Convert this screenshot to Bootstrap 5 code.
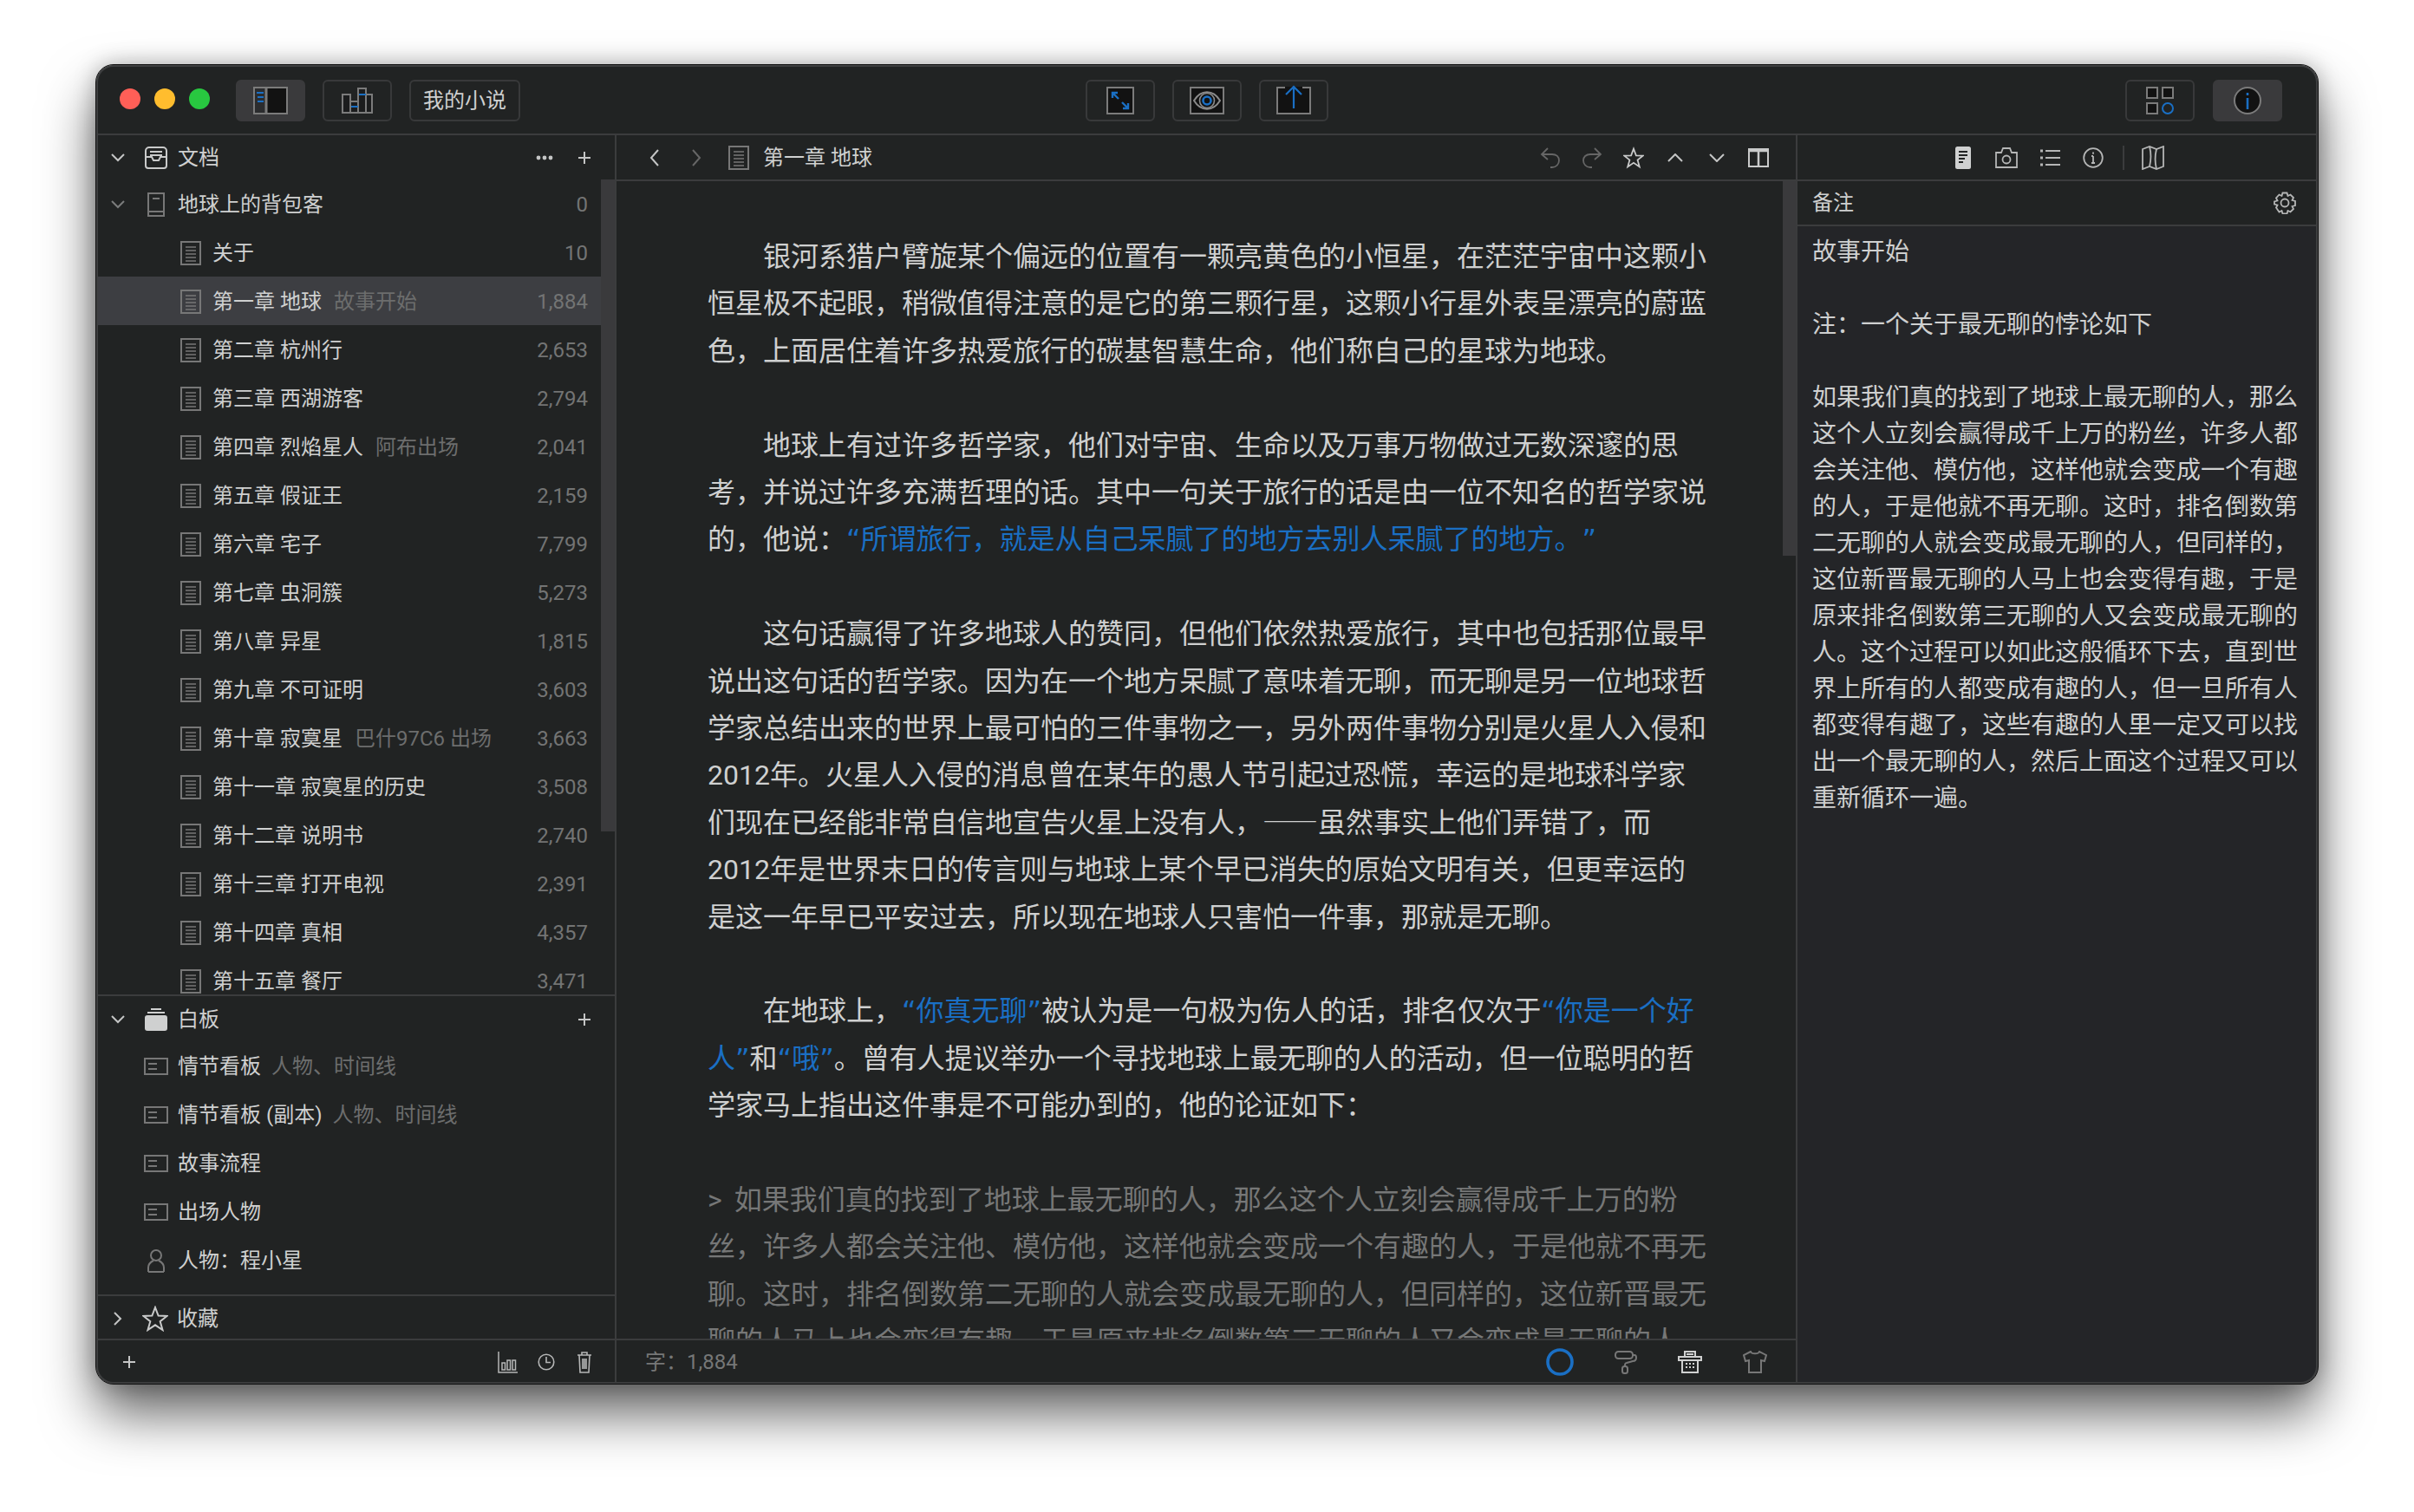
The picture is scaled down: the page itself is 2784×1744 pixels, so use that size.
<!DOCTYPE html>
<html lang="zh-CN">
<head>
  <meta charset="utf-8">
  <title>我的小说</title>
  <link href="https://cdn.jsdelivr.net/npm/bootstrap@5.3.0/dist/css/bootstrap.min.css" rel="stylesheet">
  <style>
    body {
      margin: 0;
      height: 1744px;
      overflow: hidden;
      background: #fff;
      font-family: Roboto, "Noto Sans CJK SC", sans-serif;
      font-size: 24px;
      color: #cfd0d0;
    }
    svg { display: block; flex: none; fill: none; }
    .symbol-defs { position: absolute; }
    .app-window {
      width: 2562px;
      height: 1521px;
      margin: 75px 0 0 111px;
      background: #212323;
      border-radius: 20px;
      overflow: hidden;
      outline: 1px solid #111;
      box-shadow: 0 34px 62px rgba(0,0,0,.62), 0 0 26px rgba(0,0,0,.28);
      position: relative;
    }
    .app-window::after {
      content: "";
      position: absolute;
      inset: 0;
      border-radius: 20px;
      border: 2px solid #3e3f40;
      border-bottom-color: #3a3b3c;
      pointer-events: none;
    }
    .title-bar { height: 81px; padding: 17px 41px 0 27px; border-bottom: 2px solid #3b3c3d; }
    .title-side { flex: 1 1 0; }
    .title-center { margin: 0 -7px 0 7px; }
    .title-right { gap: 21px; }
    .light { width: 24px; height: 24px; border-radius: 50%; margin-top: 10px; margin-right: 16px; }
    .light-r { background: #ff5f57; }
    .light-y { background: #ffbd2e; }
    .light-g { background: #28c840; margin-right: 14px; }
    .tool-btn {
      --bs-btn-border-radius: 6px;
      width: 80px;
      height: 48px;
      padding: 0;
      border: 2px solid #38393a;
      color: #cfd0d0;
      font-size: 24px;
    }
    .tool-btn.on { background: #3a3a3c; border-color: #3a3a3c; }
    .tool-wide { width: 128px; }
    .gap-20 { gap: 20px; }

    .main-area { height: 1440px; }
    .side-pane { width: 600px; border-right: 2px solid #3b3c3d; }
    .edit-pane { width: 1362px; border-right: 2px solid #3b3c3d; }
    .info-pane { width: 600px; }

    .pane-head { height: 51px; }
    .side-head { padding: 2px 17px 0; }
    .sec-icon { margin: 0 11px 0 22px; }
    .head-dots { margin-left: auto; }
    .head-plus { margin-left: 28px; margin-right: 10px; }
    .head-plus-only { margin-left: auto; margin-right: 10px; }
    .sep-line { height: 2px; background: #3b3c3d; flex: none; }

    .doc-scroll { height: 941px; overflow: hidden; }
    .doc-list {
      --bs-list-group-bg: transparent;
      --bs-list-group-color: #cfd0d0;
      --bs-list-group-border-width: 0;
      --bs-list-group-border-radius: 0;
      width: 582px;
      flex: none;
    }
    .doc-row { flex: none; height: 56px; padding: 2px 15px 0 97px; white-space: nowrap; line-height: 54px; }
    .doc-row.active-row { background: #3d3e42; }
    .doc-row.root-row { padding-left: 17px; }
    .doc-row.board-row { padding-left: 55px; }
    .doc-row.person-row { padding-left: 59px; }
    .chevron-dim { opacity: .55; }
    .row-icon { margin-right: 13px; }
    .root-icon { margin: 0 15px 0 26px; }
    .board-icon { margin-right: 11px; }
    .person-icon { margin-right: 15px; }
    .doc-note { color: #6c6d6d; margin-left: 14px; }
    .board-row .doc-note { margin-left: 12px; }
    .doc-count { color: #737474; margin-left: auto; }
    .scroll-col { width: 16px; flex: none; }
    .scroll-thumb { background: #3a3a3c; }
    .side-thumb { height: 752px; }
    .edit-thumb { height: 432px; }

    .board-list { height: 344px; flex: none; }
    .board-head { height: 52px; }
    .fav-row { height: 49px; padding: 2px 17px 0; flex: none; }
    .fav-star { margin: 0 10px 0 20px; }
    .foot-bar { height: 50px; flex: none; }
    .side-foot { padding: 0 26px 0 30px; gap: 22px; }
    .side-foot .foot-first { margin-right: auto; }
    .foot-trash { margin-left: 3px; }

    .edit-head { padding: 2px 19px 0 38px; }
    .nav-forward { margin-left: 38px; }
    .doc-tab { margin: 0 16px 0 31px; }
    .act-cell { width: 48px; }
    .edit-body { height: 1336px; overflow: hidden; }
    .edit-text {
      width: 1345px;
      flex: none;
      padding: 60px 88px 0 105px;
      font-size: 32px;
      line-height: 54.4px;
      color: #cfd0d0;
      text-spacing-trim: space-all;
    }
    .edit-text p { margin: 0 0 54.4px; text-indent: 64px; }
    .edit-text .quote-para { color: #767777; text-indent: 0; word-spacing: 6px; }
    .hl { color: #1a6fc4; }
    .cq { font-family: "DejaVu Sans", sans-serif; line-height: 1; }
    .cjk-dash { font-family: "Noto Sans CJK SC", sans-serif; line-height: 1; }
    .edit-foot { padding: 0 33px 0 33px; color: #767777; font-size: 24px; }
    .foot-icons { margin-left: auto; gap: 47px; align-items: center; }

    .info-tabs { height: 51px; }
    .info-tab { width: 50px; }
    .info-sep { width: 2px; height: 28px; background: #3b3c3d; margin: 0 8px 0 9px; }
    .note-head { height: 50px; padding: 0 25px 0 17px; }
    .note-body { background: #242528; height: 1335px; padding: 9px 23px 0 17px; font-size: 28px; line-height: 42px; color: #cfd0d0; flex: none; }
    .note-body p { margin: 0; }
  </style>
</head>
<body>
  <svg class="symbol-defs" width="0" height="0">
    <symbol id="i-doc" viewBox="0 0 24 28">
      <rect x="1" y="1" width="22" height="26" fill="none" stroke="#777" stroke-width="2"/>
      <path d="M6 7h12M6 11h12M6 15h12M6 19h12M6 23h12" stroke="#777" stroke-width="1.6"/>
    </symbol>
    <symbol id="i-board" viewBox="0 0 28 20">
      <rect x="1" y="1" width="26" height="18" fill="none" stroke="#777" stroke-width="2"/>
      <path d="M5 7h10M5 13h10" stroke="#777" stroke-width="2"/>
    </symbol>
    <symbol id="i-plus" viewBox="0 0 16 16">
      <path d="M8 1v14M1 8h14" fill="none" stroke="#c4c5c5" stroke-width="2"/>
    </symbol>
    <symbol id="i-down" viewBox="0 0 16 10">
      <path d="M1 1l7 7 7-7" fill="none" stroke="#c4c5c5" stroke-width="2"/>
    </symbol>
  </svg>

  <div class="app-window d-flex flex-column">
    <!-- Title bar -->
    <div class="title-bar d-flex align-items-start flex-none">
      <div class="title-side d-flex align-items-start">
        <span class="light light-r"></span><span class="light light-y"></span><span class="light light-g"></span>
        <div class="d-flex gap-20 ms-3">
          <button class="btn tool-btn on d-flex align-items-center justify-content-center">
            <svg width="40" height="32" viewBox="0 0 40 32"><rect x="1" y="1" width="38" height="30" fill="#121212" stroke="#7b7b7b" stroke-width="2"/><rect x="2" y="2" width="13" height="28" fill="#2b2c2e"/><path d="M15 1v30" stroke="#7b7b7b" stroke-width="3"/><path d="M4 7h8M5 12h7M5 17h7" stroke="#1a6fc4" stroke-width="2"/></svg>
          </button>
          <button class="btn tool-btn d-flex align-items-center justify-content-center">
            <svg width="36" height="30" viewBox="0 0 36 30"><path d="M1 8h9v21H1zM10 16h9v13h-9zM19 1h9v28h-9zM28 8h7v21h-7z" fill="#1b1c1d" stroke="#7b7b7b" stroke-width="2"/><path d="M11 22h8M20 8h8" stroke="#1a6fc4" stroke-width="2"/></svg>
          </button>
          <button class="btn tool-btn tool-wide">我的小说</button>
        </div>
      </div>
      <div class="title-center d-flex gap-20">
        <button class="btn tool-btn d-flex align-items-center justify-content-center">
          <svg width="32" height="32" viewBox="0 0 32 32"><rect x="1" y="1" width="30" height="30" fill="#121212" stroke="#7b7b7b" stroke-width="2"/><path d="M7 13V7h6M7 7l7 7M25 19v6h-6M25 25l-7-7" stroke="#1a6fc4" stroke-width="2.4"/></svg>
        </button>
        <button class="btn tool-btn d-flex align-items-center justify-content-center">
          <svg width="40" height="32" viewBox="0 0 40 32"><rect x="1" y="1" width="38" height="30" fill="#121212" stroke="#7b7b7b" stroke-width="2"/><path d="M5 16c8-13 22-13 30 0-8 13-22 13-30 0z" stroke="#8b8b8b" stroke-width="2"/><circle cx="20" cy="16" r="8.5" stroke="#8b8b8b" stroke-width="1.6"/><circle cx="20" cy="16" r="4.5" stroke="#1a6fc4" stroke-width="2.6"/></svg>
        </button>
        <button class="btn tool-btn d-flex align-items-center justify-content-center">
          <svg width="40" height="36" viewBox="0 0 40 36"><path d="M10 3H1v30h38V3h-9" fill="#121212" stroke="#7b7b7b" stroke-width="2"/><rect x="10" y="2" width="20" height="4" fill="#121212"/><path d="M20 2v25M11 11l9-9 9 9" stroke="#1a6fc4" stroke-width="2.2"/></svg>
        </button>
      </div>
      <div class="title-side title-right d-flex justify-content-end">
        <button class="btn tool-btn d-flex align-items-center justify-content-center">
          <svg width="32" height="32" viewBox="0 0 32 32"><path d="M1 1h12v12H1zM19 1h12v12H19zM1 19h12v12H1z" fill="#121212" stroke="#7b7b7b" stroke-width="2"/><ellipse cx="25" cy="25" rx="6" ry="6" stroke="#1a6fc4" stroke-width="2"/></svg>
        </button>
        <button class="btn tool-btn on d-flex align-items-center justify-content-center">
          <svg width="32" height="32" viewBox="0 0 32 32"><circle cx="16" cy="16" r="15" fill="#121212" stroke="#7b7b7b" stroke-width="2"/><path d="M16 13v13M16 7v3" stroke="#1a6fc4" stroke-width="2.6"/></svg>
        </button>
      </div>
    </div>

    <div class="main-area d-flex">
      <!-- Sidebar -->
      <div class="side-pane d-flex flex-column flex-none">
        <div class="pane-head side-head d-flex align-items-center">
          <svg width="16" height="10"><use href="#i-down"/></svg>
          <svg class="sec-icon" width="28" height="28" viewBox="0 0 28 28" stroke="#c9caca" stroke-width="2"><path d="M2 13V6a4 4 0 0 1 4-4h16a4 4 0 0 1 4 4v7M2 13v10a3 3 0 0 0 3 3h18a3 3 0 0 0 3-3V13h-7l-2 4h-6l-2-4H2ZM7 7h14M7 11h14"/></svg>
          <span>文档</span>
          <svg class="head-dots" width="20" height="6" viewBox="0 0 20 6"><circle cx="3" cy="3" r="2.4" fill="#c4c5c5"/><circle cx="10" cy="3" r="2.4" fill="#c4c5c5"/><circle cx="17" cy="3" r="2.4" fill="#c4c5c5"/></svg>
          <svg class="head-plus" width="16" height="16"><use href="#i-plus"/></svg>
        </div>

        <div class="doc-scroll d-flex">
          <div class="list-group doc-list">
            <div class="list-group-item d-flex align-items-center doc-row root-row">
              <svg class="chevron-dim" width="16" height="10"><use href="#i-down"/></svg>
              <svg class="root-icon" width="20" height="28" viewBox="0 0 20 28" stroke="#777" stroke-width="2"><rect x="1" y="1" width="18" height="26"/><path d="M1 22h18M6 7h8"/></svg>
              <span>地球上的背包客</span><span class="doc-count">0</span>
            </div>
            <div class="list-group-item d-flex align-items-center doc-row"><svg class="row-icon" width="24" height="28"><use href="#i-doc"/></svg><span>关于</span><span class="doc-count">10</span></div>
            <div class="list-group-item d-flex align-items-center doc-row active-row"><svg class="row-icon" width="24" height="28"><use href="#i-doc"/></svg><span>第一章 地球</span><span class="doc-note">故事开始</span><span class="doc-count">1,884</span></div>
            <div class="list-group-item d-flex align-items-center doc-row"><svg class="row-icon" width="24" height="28"><use href="#i-doc"/></svg><span>第二章 杭州行</span><span class="doc-count">2,653</span></div>
            <div class="list-group-item d-flex align-items-center doc-row"><svg class="row-icon" width="24" height="28"><use href="#i-doc"/></svg><span>第三章 西湖游客</span><span class="doc-count">2,794</span></div>
            <div class="list-group-item d-flex align-items-center doc-row"><svg class="row-icon" width="24" height="28"><use href="#i-doc"/></svg><span>第四章 烈焰星人</span><span class="doc-note">阿布出场</span><span class="doc-count">2,041</span></div>
            <div class="list-group-item d-flex align-items-center doc-row"><svg class="row-icon" width="24" height="28"><use href="#i-doc"/></svg><span>第五章 假证王</span><span class="doc-count">2,159</span></div>
            <div class="list-group-item d-flex align-items-center doc-row"><svg class="row-icon" width="24" height="28"><use href="#i-doc"/></svg><span>第六章 宅子</span><span class="doc-count">7,799</span></div>
            <div class="list-group-item d-flex align-items-center doc-row"><svg class="row-icon" width="24" height="28"><use href="#i-doc"/></svg><span>第七章 虫洞簇</span><span class="doc-count">5,273</span></div>
            <div class="list-group-item d-flex align-items-center doc-row"><svg class="row-icon" width="24" height="28"><use href="#i-doc"/></svg><span>第八章 异星</span><span class="doc-count">1,815</span></div>
            <div class="list-group-item d-flex align-items-center doc-row"><svg class="row-icon" width="24" height="28"><use href="#i-doc"/></svg><span>第九章 不可证明</span><span class="doc-count">3,603</span></div>
            <div class="list-group-item d-flex align-items-center doc-row"><svg class="row-icon" width="24" height="28"><use href="#i-doc"/></svg><span>第十章 寂寞星</span><span class="doc-note">巴什97C6 出场</span><span class="doc-count">3,663</span></div>
            <div class="list-group-item d-flex align-items-center doc-row"><svg class="row-icon" width="24" height="28"><use href="#i-doc"/></svg><span>第十一章 寂寞星的历史</span><span class="doc-count">3,508</span></div>
            <div class="list-group-item d-flex align-items-center doc-row"><svg class="row-icon" width="24" height="28"><use href="#i-doc"/></svg><span>第十二章 说明书</span><span class="doc-count">2,740</span></div>
            <div class="list-group-item d-flex align-items-center doc-row"><svg class="row-icon" width="24" height="28"><use href="#i-doc"/></svg><span>第十三章 打开电视</span><span class="doc-count">2,391</span></div>
            <div class="list-group-item d-flex align-items-center doc-row"><svg class="row-icon" width="24" height="28"><use href="#i-doc"/></svg><span>第十四章 真相</span><span class="doc-count">4,357</span></div>
            <div class="list-group-item d-flex align-items-center doc-row"><svg class="row-icon" width="24" height="28"><use href="#i-doc"/></svg><span>第十五章 餐厅</span><span class="doc-count">3,471</span></div>
          </div>
          <div class="scroll-col"><div class="scroll-thumb side-thumb"></div></div>
        </div>
        <div class="sep-line"></div>

        <div class="board-list d-flex flex-column">
          <div class="board-head side-head d-flex align-items-center flex-none">
            <svg width="16" height="10"><use href="#i-down"/></svg>
            <svg class="sec-icon" width="28" height="28" viewBox="0 0 28 28"><path d="M8 2h12M4 6h20" stroke="#cfd0d0" stroke-width="2"/><rect x="1" y="9" width="26" height="18" rx="3" fill="#cfd0d0"/></svg>
            <span>白板</span>
            <svg class="head-plus-only" width="16" height="16"><use href="#i-plus"/></svg>
          </div>
          <div class="d-flex align-items-center doc-row board-row"><svg class="board-icon" width="28" height="20"><use href="#i-board"/></svg><span>情节看板</span><span class="doc-note">人物、时间线</span></div>
          <div class="d-flex align-items-center doc-row board-row"><svg class="board-icon" width="28" height="20"><use href="#i-board"/></svg><span>情节看板 (副本)</span><span class="doc-note">人物、时间线</span></div>
          <div class="d-flex align-items-center doc-row board-row"><svg class="board-icon" width="28" height="20"><use href="#i-board"/></svg><span>故事流程</span></div>
          <div class="d-flex align-items-center doc-row board-row"><svg class="board-icon" width="28" height="20"><use href="#i-board"/></svg><span>出场人物</span></div>
          <div class="d-flex align-items-center doc-row person-row">
            <svg class="person-icon" width="20" height="28" viewBox="0 0 20 28" stroke="#777" stroke-width="2"><circle cx="10" cy="8" r="6"/><path d="M1 27v-5c0-4 4-7 6-8M19 27v-5c0-4-4-7-6-8M1 27h18"/></svg>
            <span>人物：程小星</span>
          </div>
        </div>
        <div class="sep-line"></div>
        <div class="fav-row d-flex align-items-center">
          <svg width="16" height="16" viewBox="0 0 16 16"><path d="M4 1l7 7-7 7" fill="none" stroke="#c4c5c5" stroke-width="2"/></svg>
          <svg class="fav-star" width="30" height="30" viewBox="0 0 30 30"><path d="M15 2l3.6 9.6L28.5 12l-7.800 6.200L23.500 28 15 22.300 6.500 28l2.800-9.800L1.500 12l9.900-.4z" stroke="#c9caca" stroke-width="2"/></svg>
          <span>收藏</span>
        </div>
        <div class="sep-line"></div>
        <div class="foot-bar side-foot d-flex align-items-center">
          <svg class="foot-first" width="16" height="16"><use href="#i-plus"/></svg>
          <svg width="24" height="26" viewBox="0 0 24 26" stroke="#b5b6b6" stroke-width="1.5"><path d="M1 1v24h22M5 14h3.500v8H5zM11 11h3.500v11H11zM17 11h3.500v11H17z"/></svg>
          <svg width="20" height="20" viewBox="0 0 20 20" stroke="#b5b6b6" stroke-width="1.6"><circle cx="10" cy="10" r="8.800"/><path d="M10 4v6.500h5"/></svg>
          <svg class="foot-trash" width="18" height="26" viewBox="0 0 18 26" stroke="#b5b6b6" stroke-width="1.6"><path d="M1 5h16M6 5V2h6v3M3 5l1 20h10l1-20M7 9v12M9 9v12M11 9v12"/></svg>
        </div>
      </div>

      <!-- Editor -->
      <div class="edit-pane d-flex flex-column flex-none">
        <div class="pane-head edit-head d-flex align-items-center">
          <svg width="11" height="20" viewBox="0 0 11 20"><path d="M10 1L2 10l8 9" stroke="#c4c5c5" stroke-width="2"/></svg>
          <svg class="nav-forward" width="11" height="20" viewBox="0 0 11 20"><path d="M1 1l8 9-8 9" stroke="#666" stroke-width="2"/></svg>
          <svg class="doc-tab" width="24" height="28"><use href="#i-doc"/></svg>
          <span>第一章 地球</span>
          <div class="d-flex align-items-center ms-auto">
            <div class="act-cell d-flex justify-content-center"><svg width="24" height="26" viewBox="0 0 24 26" stroke="#666" stroke-width="1.800"><path d="M9 2L2 9l7 6M2 9h12c5 0 8 3 8 7s-3 8-8 8h-2"/></svg></div>
            <div class="act-cell d-flex justify-content-center"><svg width="24" height="26" viewBox="0 0 24 26" stroke="#666" stroke-width="1.800"><path d="M15 2l7 7-7 6M22 9H10c-5 0-8 3-8 7s3 8 8 8h2"/></svg></div>
            <div class="act-cell d-flex justify-content-center"><svg width="24" height="26" viewBox="0 0 30 30"><path d="M15 2l3.600 9.600L28.500 12l-7.800 6.200L23.500 28 15 22.300 6.500 28l2.800-9.800L1.500 12l9.900-.4z" stroke="#c9caca" stroke-width="2.200"/></svg></div>
            <div class="act-cell d-flex justify-content-center"><svg width="18" height="10" viewBox="0 0 18 10"><path d="M1 9l8-8 8 8" stroke="#c4c5c5" stroke-width="2"/></svg></div>
            <div class="act-cell d-flex justify-content-center"><svg width="18" height="10" viewBox="0 0 18 10"><path d="M1 1l8 8 8-8" stroke="#c4c5c5" stroke-width="2"/></svg></div>
            <div class="act-cell d-flex justify-content-center"><svg width="24" height="22" viewBox="0 0 24 22" stroke="#c9caca" stroke-width="2"><rect x="1" y="1" width="22" height="20"/><path d="M12 1v20M1 3h22" stroke-width="2.500"/></svg></div>
          </div>
        </div>
        <div class="sep-line"></div>
        <div class="edit-body d-flex">
          <div class="edit-text">
            <p>银河系猎户臂旋某个偏远的位置有一颗亮黄色的小恒星，在茫茫宇宙中这颗小恒星极不起眼，稍微值得注意的是它的第三颗行星，这颗小行星外表呈漂亮的蔚蓝色，上面居住着许多热爱旅行的碳基智慧生命，他们称自己的星球为地球。</p>
            <p>地球上有过许多哲学家，他们对宇宙、生命以及万事万物做过无数深邃的思考，并说过许多充满哲理的话。其中一句关于旅行的话是由一位不知名的哲学家说的，他说：<span class="hl"><span class="cq">“</span>所谓旅行，就是从自己呆腻了的地方去别人呆腻了的地方。<span class="cq">”</span></span></p>
            <p>这句话赢得了许多地球人的赞同，但他们依然热爱旅行，其中也包括那位最早说出这句话的哲学家。因为在一个地方呆腻了意味着无聊，而无聊是另一位地球哲学家总结出来的世界上最可怕的三件事物之一，另外两件事物分别是火星人入侵和2012年。火星人入侵的消息曾在某年的愚人节引起过恐慌，幸运的是地球科学家们现在已经能非常自信地宣告火星上没有人，<span class="cjk-dash">——</span>虽然事实上他们弄错了，而2012年是世界末日的传言则与地球上某个早已消失的原始文明有关，但更幸运的是这一年早已平安过去，所以现在地球人只害怕一件事，那就是无聊。</p>
            <p>在地球上，<span class="hl"><span class="cq">“</span>你真无聊<span class="cq">”</span></span>被认为是一句极为伤人的话，排名仅次于<span class="hl"><span class="cq">“</span>你是一个好</span><span class="hl">人<span class="cq">”</span></span>和<span class="hl"><span class="cq">“</span>哦<span class="cq">”</span></span>。曾有人提议举办一个寻找地球上最无聊的人的活动，但一位聪明的哲学家马上指出这件事是不可能办到的，他的论证如下：</p>
            <p class="quote-para">&gt; 如果我们真的找到了地球上最无聊的人，那么这个人立刻会赢得成千上万的粉丝，许多人都会关注他、模仿他，这样他就会变成一个有趣的人，于是他就不再无聊。这时，排名倒数第二无聊的人就会变成最无聊的人，但同样的，这位新晋最无聊的人马上也会变得有趣，于是原来排名倒数第三无聊的人又会变成最无聊的人</p>
          </div>
          <div class="scroll-col ms-auto"><div class="scroll-thumb edit-thumb"></div></div>
        </div>
        <div class="sep-line"></div>
        <div class="foot-bar edit-foot d-flex align-items-center">
          <span>字：1,884</span>
          <div class="foot-icons d-flex">
            <svg width="32" height="32" viewBox="0 0 32 32"><circle cx="16" cy="16" r="14" stroke="#1a6fc4" stroke-width="3.600"/></svg>
            <svg width="26" height="28" viewBox="0 0 26 28" stroke="#777" stroke-width="2"><rect x="1" y="2" width="20" height="8" rx="3.500"/><path d="M21 6h2c2 0 2 2 2 3 0 3-2 4-4 4l-7 2c-2 .5-2 1-2 3"/><rect x="9" y="19" width="6" height="8" rx="2.500"/></svg>
            <svg width="28" height="26" viewBox="0 0 28 26" stroke="#cfd0d0" stroke-width="2"><path d="M8 7V1h12v6M1 7h26v4H1zM5 11v14h18V11M10 4h8"/><path d="M9 15h2M13 15h2M17 15h2M9 19h2M13 19h2M17 19h2" stroke-width="2"/></svg>
            <svg width="28" height="26" viewBox="0 0 28 26" stroke="#777" stroke-width="2"><path d="M9 1L1 5l2 7 4-1v14h14V11l4 1 2-7-8-4c-1 3-9 3-10 0z"/></svg>
          </div>
        </div>
      </div>

      <!-- Inspector -->
      <div class="info-pane d-flex flex-column">
        <div class="info-tabs d-flex align-items-center justify-content-center">
          <div class="info-tab d-flex justify-content-center">
            <svg width="18" height="26" viewBox="0 0 18 26"><rect width="18" height="26" rx="2.500" fill="#cfd0d0"/><path d="M4 6h10M4 10h10M4 14h7M4 18h5" stroke="#212323" stroke-width="1.800"/></svg>
          </div>
          <div class="info-tab d-flex justify-content-center">
            <svg width="26" height="24" viewBox="0 0 26 24" stroke="#b5b6b6" stroke-width="1.800"><path d="M1 6h6l2-5h8l2 5h6v17H1z"/><circle cx="13" cy="14" r="4.500"/></svg>
          </div>
          <div class="info-tab d-flex justify-content-center">
            <svg width="24" height="22" viewBox="0 0 24 22" stroke="#b5b6b6" stroke-width="2"><path d="M7 3h17M7 11h17M7 19h17"/><path d="M1 3h3M1 11h3M1 19h3" stroke-width="3"/></svg>
          </div>
          <div class="info-tab d-flex justify-content-center">
            <svg width="24" height="24" viewBox="0 0 24 24" stroke="#b5b6b6" stroke-width="1.800"><circle cx="12" cy="12" r="10.800"/><path d="M12 10v8M10 18h4M10 10h2M12 5.500v2.200"/></svg>
          </div>
          <div class="info-sep"></div>
          <div class="info-tab d-flex justify-content-center">
            <svg width="26" height="28" viewBox="0 0 26 28" stroke="#b5b6b6" stroke-width="1.800"><path d="M1 4l8-3 8 3 8-3v23l-8 3-8-3-8 3zM9 1c2 8 2 15 0 23M17 4c-2 8-2 15 0 23"/></svg>
          </div>
        </div>
        <div class="sep-line"></div>
        <div class="note-head d-flex align-items-center justify-content-between">
          <span>备注</span>
          <svg width="26" height="26" viewBox="0 0 26 26" stroke="#b5b6b6" stroke-width="1.800"><path d="M10.500 1.500h5l1 3.500 3-1.500 3.500 3.500-1.500 3 3.500 1v5l-3.500 1 1.500 3-3.500 3.500-3-1.500-1 3.500h-5l-1-3.500-3 1.500L3 18.500l1.500-3L1 14.500v-3l3.500-1-1.500-3L6.500 3.500l3 1.500z"/><circle cx="13" cy="13" r="4.500"/></svg>
        </div>
        <div class="sep-line"></div>
        <div class="note-body">
          <p>故事开始</p>
          <p>&nbsp;</p>
          <p>注：一个关于最无聊的悖论如下</p>
          <p>&nbsp;</p>
          <p>如果我们真的找到了地球上最无聊的人，那么这个人立刻会赢得成千上万的粉丝，许多人都会关注他、模仿他，这样他就会变成一个有趣的人，于是他就不再无聊。这时，排名倒数第二无聊的人就会变成最无聊的人，但同样的，这位新晋最无聊的人马上也会变得有趣，于是原来排名倒数第三无聊的人又会变成最无聊的人。这个过程可以如此这般循环下去，直到世界上所有的人都变成有趣的人，但一旦所有人都变得有趣了，这些有趣的人里一定又可以找出一个最无聊的人，然后上面这个过程又可以重新循环一遍。</p>
        </div>
      </div>
    </div>
  </div>

  <script src="https://cdn.jsdelivr.net/npm/bootstrap@5.3.0/dist/js/bootstrap.bundle.min.js"></script>
</body>
</html>
